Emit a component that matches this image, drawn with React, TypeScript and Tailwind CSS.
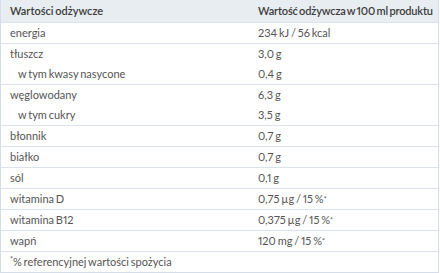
import React from "react";

type Row = { lines: { label: string; value: string; indent?: boolean }[] };

const rows: Row[] = [
  { lines: [{ label: "energia", value: "234 kJ / 56 kcal" }] },
  {
    lines: [
      { label: "tłuszcz", value: "3,0 g" },
      { label: "w tym kwasy nasycone", value: "0,4 g", indent: true },
    ],
  },
  {
    lines: [
      { label: "węglowodany", value: "6,3 g" },
      { label: "w tym cukry", value: "3,5 g", indent: true },
    ],
  },
  { lines: [{ label: "błonnik", value: "0,7 g" }] },
  { lines: [{ label: "białko", value: "0,7 g" }] },
  { lines: [{ label: "sól", value: "0,1 g" }] },
  { lines: [{ label: "witamina D", value: "0,75 µg / 15 %*" }] },
  { lines: [{ label: "witamina B12", value: "0,375 µg / 15 %*" }] },
  { lines: [{ label: "wapń", value: "120 mg / 15 %*" }] },
  { lines: [{ label: "*% referencyjnej wartości spożycia", value: "" }] },
];

function Value({ v }: { v: string }) {
  if (v.endsWith("*")) {
    return (
      <span>
        {v.slice(0, -1)}
        <sup className="text-[7px] relative top-[-1px]">*</sup>
      </span>
    );
  }
  return <span>{v}</span>;
}

function Label({ v }: { v: string }) {
  if (v.startsWith("*")) {
    return (
      <span>
        <sup className="text-[7px]">*</sup>
        {v.slice(1)}
      </span>
    );
  }
  return <span>{v}</span>;
}

export default function App() {
  return (
    <div
      className="w-[440px] h-[273px] bg-white overflow-hidden"
      style={{ fontFamily: "Lato, 'Open Sans', sans-serif" }}
    >
      <div className="w-[439px] border-l border-r border-b border-[#d5dee8] text-[11px] text-[#555] proportional-nums [word-spacing:-1px] whitespace-nowrap">
        <div className="flex h-[22px] items-center bg-[#e8edf2] font-semibold text-[#3b3b3b]">
          <div className="w-[257px] pl-[9px]">Wartości odżywcze</div>
          <div className="flex-1 [word-spacing:-1.2px] tracking-[-0.15px]">Wartość odżywcza w 100 ml produktu</div>
        </div>
        {rows.map((r, i) => (
          <div key={i} className="border-t border-[#dde3ea]">
            {r.lines.map((l, j) => (
              <div key={j} className="flex h-[20px] items-center">
                <div className={`w-[257px] ${l.indent ? "pl-[17px]" : "pl-[9px]"}`}>
                  <Label v={l.label} />
                </div>
                <div className="flex-1">
                  <Value v={l.value} />
                </div>
              </div>
            ))}
          </div>
        ))}
      </div>
    </div>
  );
}
